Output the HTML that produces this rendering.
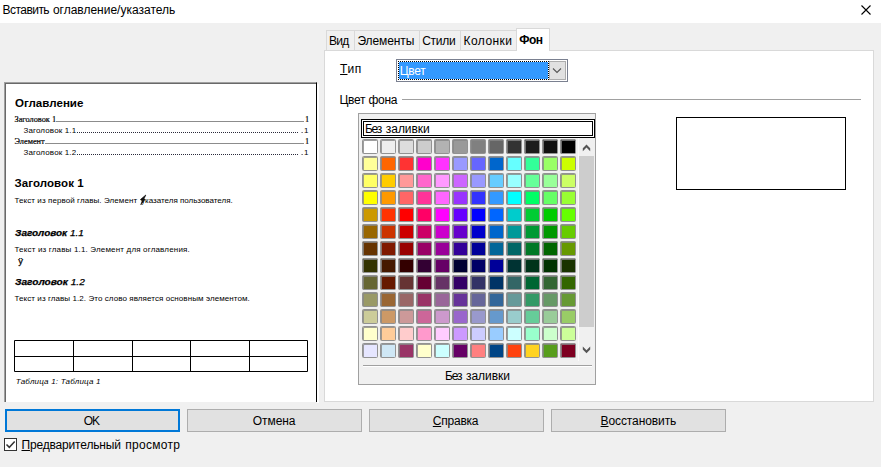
<!DOCTYPE html>
<html lang="ru">
<head>
<meta charset="utf-8">
<title>Вставить оглавление/указатель</title>
<style>
html,body{margin:0;padding:0}
body{width:881px;height:467px;overflow:hidden;background:#f0f0f0;position:relative;
 font-family:"Liberation Sans","DejaVu Sans",sans-serif;font-size:12px;color:#000}
div,i,span,b{box-sizing:border-box}
.a{position:absolute}
.t{position:absolute;white-space:nowrap;line-height:normal;color:#000}
.f-ui{font-family:"Liberation Sans","DejaVu Sans",sans-serif}
.f-se{font-family:"Liberation Serif","DejaVu Serif",serif}
.u{text-decoration:underline;text-underline-offset:1px}
#titlebar{left:0;top:0;width:881px;height:23px;background:#fff}
#close{left:858px;top:2px;width:16px;height:16px}
/* preview */
#pv{left:4px;top:82px;width:313px;height:320px;background:#fff;border-left:1px solid #a0a0a0;border-top:1px solid #a0a0a0;border-right:1px solid #000}
#pvw{left:317px;top:84px;width:2px;height:319px;background:#fff}
#pv:before{content:"";position:absolute;left:0;top:0;right:0;bottom:0;border-left:1px solid #696969;border-top:1px solid #696969}
.ld{position:absolute;height:1px}
/* tabs */
.tab{position:absolute;top:30px;height:21px;border:1px solid #d9d9d9;border-bottom:none;background:#f0f0f0}
#panel{left:324px;top:50px;width:550px;height:352px;background:#fff;border:1px solid #d9d9d9}
#tabsel{left:516px;top:28px;width:34px;height:23px;background:#fff;border:1px solid #d9d9d9;border-bottom:none}
/* combo */
#combo{left:396px;top:59px;width:172px;height:23px;background:#fff;border:1px solid #7a8090}
#csel{left:398px;top:61px;width:151px;height:19px;background:#3399ff;background-clip:padding-box;border:1px dotted #000;background-color:#3399ff}
#cselbg{left:398px;top:61px;width:151px;height:19px;background:#fff}
#cbtn{left:549px;top:61px;width:17px;height:19px;background:#e1e1e1;border:1px solid #adadad}
#sep{left:402px;top:99px;width:459px;height:1px;background:#a0a0a0}
/* popup */
#pop{left:358px;top:113px;width:238px;height:272px;background:#f0f0f0;border:1px solid #a0a0a0}
#none{left:361px;top:119px;width:234px;height:19px;background:#fff;border:1px solid #000;box-shadow:inset 0 0 0 1px #fff, inset 0 0 0 2px #000}
.c{position:absolute;width:16px;height:15px;border:1px solid #929292;border-radius:1.5px;box-shadow:inset 1px 1px 0 rgba(135,135,135,.8)}
#sb{left:579px;top:138px;width:16px;height:223px;background:#f0f0f0}
#sbl{left:578px;top:138px;width:1px;height:223px;background:#fafafa}
#thumb{left:579px;top:156px;width:15px;height:171px;background:#cdcdcd}
#psep{left:363px;top:365px;width:229px;height:1px;background:#a0a0a0;box-shadow:0 1px 0 #fff}
#prev{left:676px;top:117px;width:170px;height:73px;background:#fff;border:1px solid #000}
/* buttons */
.btn{position:absolute;top:409px;width:175px;height:23px;background:#e1e1e1;border:1px solid #adadad}
#bok{border:2px solid #0078d7}
#cb{left:4px;top:438px;width:13px;height:13px;background:#fff;border:1px solid #333}

</style>
</head>
<body>
<div id="titlebar" class="a"></div>
<svg id="close" class="a" viewBox="0 0 16 16"><path d="M3.5 3.5 L12.5 12.5 M12.5 3.5 L3.5 12.5" stroke="#000" stroke-width="1.1" fill="none"/></svg>

<div id="pv" class="a"></div>
<div id="pvw" class="a"></div>
<div class="ld a" style="left:56px;top:121px;width:248px;background:#8c8c8c"></div>
<div class="ld a" style="left:45px;top:143px;width:259px;background:#8c8c8c"></div>
<svg class="a" style="left:77px;top:131px" width="228" height="25" viewBox="0 0 228 25"><path d="M0 1.5H222 M0 23.5H222" stroke="#2a2a3a" stroke-width="1" stroke-dasharray="1 1" fill="none"/><path d="M224.6 1.5h1 M224.6 23.5h1" stroke="#2a2a3a" stroke-width="1" fill="none"/></svg>
<svg class="a" style="left:138px;top:193px" width="10" height="13" viewBox="0 0 10 13"><path d="M7.8 2 L2.4 6.6 L4.4 7.6 L2.8 11.6 L6.8 6.4 L6 5.8 Z" fill="#111" stroke="#111" stroke-width="0.7" stroke-linejoin="round"/></svg>
<svg class="a" style="left:14px;top:340px" width="296" height="33" viewBox="0 0 296 33"><path d="M0.5 0.5H293.5V31.5H0.5Z M0.5 16.5H293.5 M59.5 0.5V31.5 M118.5 0.5V31.5 M176.5 0.5V31.5 M235.5 0.5V31.5" stroke="#000" stroke-width="1" fill="none"/></svg>

<div class="tab" style="left:326px;width:29px"></div>
<div class="tab" style="left:354px;width:66px"></div>
<div class="tab" style="left:419px;width:42px"></div>
<div class="tab" style="left:460px;width:57px"></div>
<div id="panel" class="a"></div>
<div id="tabsel" class="a"></div>

<div id="combo" class="a"></div>
<div id="cselbg" class="a"></div>
<div id="csel" class="a"></div>
<div id="cbtn" class="a"></div>
<svg class="a" style="left:552px;top:66px" width="10" height="8" viewBox="0 0 10 8"><path d="M1 2.5 L5 6.5 L9 2.5" stroke="#555" stroke-width="1.1" fill="none"/></svg>
<div id="sep" class="a"></div>

<div id="pop" class="a"></div>
<div id="none" class="a"></div>
<i class="c" style="left:362px;top:139px;background:#ffffff"></i><i class="c" style="left:380px;top:139px;background:#eeeeee"></i><i class="c" style="left:398px;top:139px;background:#dddddd"></i><i class="c" style="left:416px;top:139px;background:#cccccc"></i><i class="c" style="left:434px;top:139px;background:#b2b2b2"></i><i class="c" style="left:452px;top:139px;background:#999999"></i><i class="c" style="left:470px;top:139px;background:#808080"></i><i class="c" style="left:488px;top:139px;background:#666666"></i><i class="c" style="left:506px;top:139px;background:#333333"></i><i class="c" style="left:524px;top:139px;background:#1c1c1c"></i><i class="c" style="left:542px;top:139px;background:#111111"></i><i class="c" style="left:560px;top:139px;background:#000000"></i><i class="c" style="left:362px;top:156px;background:#ffff99"></i><i class="c" style="left:380px;top:156px;background:#ff6600"></i><i class="c" style="left:398px;top:156px;background:#ff3333"></i><i class="c" style="left:416px;top:156px;background:#ff00cc"></i><i class="c" style="left:434px;top:156px;background:#ff33ff"></i><i class="c" style="left:452px;top:156px;background:#9999ff"></i><i class="c" style="left:470px;top:156px;background:#6666ff"></i><i class="c" style="left:488px;top:156px;background:#0066cc"></i><i class="c" style="left:506px;top:156px;background:#66ffff"></i><i class="c" style="left:524px;top:156px;background:#33ff99"></i><i class="c" style="left:542px;top:156px;background:#99ff66"></i><i class="c" style="left:560px;top:156px;background:#ccff00"></i><i class="c" style="left:362px;top:173px;background:#ffff66"></i><i class="c" style="left:380px;top:173px;background:#ffcc00"></i><i class="c" style="left:398px;top:173px;background:#ff9999"></i><i class="c" style="left:416px;top:173px;background:#ff66cc"></i><i class="c" style="left:434px;top:173px;background:#ff99ff"></i><i class="c" style="left:452px;top:173px;background:#cc66ff"></i><i class="c" style="left:470px;top:173px;background:#9999ff"></i><i class="c" style="left:488px;top:173px;background:#66ccff"></i><i class="c" style="left:506px;top:173px;background:#99ffff"></i><i class="c" style="left:524px;top:173px;background:#66ff99"></i><i class="c" style="left:542px;top:173px;background:#99ff99"></i><i class="c" style="left:560px;top:173px;background:#ccff66"></i><i class="c" style="left:362px;top:190px;background:#ffff00"></i><i class="c" style="left:380px;top:190px;background:#ff9900"></i><i class="c" style="left:398px;top:190px;background:#ff6666"></i><i class="c" style="left:416px;top:190px;background:#ff3399"></i><i class="c" style="left:434px;top:190px;background:#ff66ff"></i><i class="c" style="left:452px;top:190px;background:#9933ff"></i><i class="c" style="left:470px;top:190px;background:#3333ff"></i><i class="c" style="left:488px;top:190px;background:#3399ff"></i><i class="c" style="left:506px;top:190px;background:#00ffff"></i><i class="c" style="left:524px;top:190px;background:#00ff66"></i><i class="c" style="left:542px;top:190px;background:#66ff66"></i><i class="c" style="left:560px;top:190px;background:#99ff33"></i><i class="c" style="left:362px;top:207px;background:#cc9900"></i><i class="c" style="left:380px;top:207px;background:#ff3300"></i><i class="c" style="left:398px;top:207px;background:#ff0000"></i><i class="c" style="left:416px;top:207px;background:#ff0066"></i><i class="c" style="left:434px;top:207px;background:#ff00ff"></i><i class="c" style="left:452px;top:207px;background:#6600ff"></i><i class="c" style="left:470px;top:207px;background:#0000ff"></i><i class="c" style="left:488px;top:207px;background:#0066ff"></i><i class="c" style="left:506px;top:207px;background:#00cccc"></i><i class="c" style="left:524px;top:207px;background:#00cc33"></i><i class="c" style="left:542px;top:207px;background:#00cc00"></i><i class="c" style="left:560px;top:207px;background:#66ff00"></i><i class="c" style="left:362px;top:224px;background:#996600"></i><i class="c" style="left:380px;top:224px;background:#cc3300"></i><i class="c" style="left:398px;top:224px;background:#cc0000"></i><i class="c" style="left:416px;top:224px;background:#cc0066"></i><i class="c" style="left:434px;top:224px;background:#cc00cc"></i><i class="c" style="left:452px;top:224px;background:#6600cc"></i><i class="c" style="left:470px;top:224px;background:#0000cc"></i><i class="c" style="left:488px;top:224px;background:#0066cc"></i><i class="c" style="left:506px;top:224px;background:#009999"></i><i class="c" style="left:524px;top:224px;background:#009933"></i><i class="c" style="left:542px;top:224px;background:#009900"></i><i class="c" style="left:560px;top:224px;background:#66cc00"></i><i class="c" style="left:362px;top:241px;background:#663300"></i><i class="c" style="left:380px;top:241px;background:#801900"></i><i class="c" style="left:398px;top:241px;background:#990000"></i><i class="c" style="left:416px;top:241px;background:#990066"></i><i class="c" style="left:434px;top:241px;background:#990099"></i><i class="c" style="left:452px;top:241px;background:#330099"></i><i class="c" style="left:470px;top:241px;background:#000099"></i><i class="c" style="left:488px;top:241px;background:#006699"></i><i class="c" style="left:506px;top:241px;background:#006666"></i><i class="c" style="left:524px;top:241px;background:#007826"></i><i class="c" style="left:542px;top:241px;background:#006600"></i><i class="c" style="left:560px;top:241px;background:#669900"></i><i class="c" style="left:362px;top:258px;background:#333300"></i><i class="c" style="left:380px;top:258px;background:#461900"></i><i class="c" style="left:398px;top:258px;background:#330000"></i><i class="c" style="left:416px;top:258px;background:#330033"></i><i class="c" style="left:434px;top:258px;background:#660066"></i><i class="c" style="left:452px;top:258px;background:#000033"></i><i class="c" style="left:470px;top:258px;background:#000066"></i><i class="c" style="left:488px;top:258px;background:#000099"></i><i class="c" style="left:506px;top:258px;background:#003333"></i><i class="c" style="left:524px;top:258px;background:#00331a"></i><i class="c" style="left:542px;top:258px;background:#003300"></i><i class="c" style="left:560px;top:258px;background:#193300"></i><i class="c" style="left:362px;top:275px;background:#666633"></i><i class="c" style="left:380px;top:275px;background:#661900"></i><i class="c" style="left:398px;top:275px;background:#663333"></i><i class="c" style="left:416px;top:275px;background:#660033"></i><i class="c" style="left:434px;top:275px;background:#663366"></i><i class="c" style="left:452px;top:275px;background:#330066"></i><i class="c" style="left:470px;top:275px;background:#333366"></i><i class="c" style="left:488px;top:275px;background:#003366"></i><i class="c" style="left:506px;top:275px;background:#336666"></i><i class="c" style="left:524px;top:275px;background:#006633"></i><i class="c" style="left:542px;top:275px;background:#336633"></i><i class="c" style="left:560px;top:275px;background:#336600"></i><i class="c" style="left:362px;top:292px;background:#999966"></i><i class="c" style="left:380px;top:292px;background:#996633"></i><i class="c" style="left:398px;top:292px;background:#996666"></i><i class="c" style="left:416px;top:292px;background:#993366"></i><i class="c" style="left:434px;top:292px;background:#996699"></i><i class="c" style="left:452px;top:292px;background:#663399"></i><i class="c" style="left:470px;top:292px;background:#666699"></i><i class="c" style="left:488px;top:292px;background:#336699"></i><i class="c" style="left:506px;top:292px;background:#669999"></i><i class="c" style="left:524px;top:292px;background:#339966"></i><i class="c" style="left:542px;top:292px;background:#669966"></i><i class="c" style="left:560px;top:292px;background:#669933"></i><i class="c" style="left:362px;top:309px;background:#cccc99"></i><i class="c" style="left:380px;top:309px;background:#cc9966"></i><i class="c" style="left:398px;top:309px;background:#cc9999"></i><i class="c" style="left:416px;top:309px;background:#cc6699"></i><i class="c" style="left:434px;top:309px;background:#cc99cc"></i><i class="c" style="left:452px;top:309px;background:#9966cc"></i><i class="c" style="left:470px;top:309px;background:#9999cc"></i><i class="c" style="left:488px;top:309px;background:#6699cc"></i><i class="c" style="left:506px;top:309px;background:#99cccc"></i><i class="c" style="left:524px;top:309px;background:#66cc99"></i><i class="c" style="left:542px;top:309px;background:#99cc99"></i><i class="c" style="left:560px;top:309px;background:#99cc66"></i><i class="c" style="left:362px;top:326px;background:#ffffcc"></i><i class="c" style="left:380px;top:326px;background:#ffcc99"></i><i class="c" style="left:398px;top:326px;background:#ffcccc"></i><i class="c" style="left:416px;top:326px;background:#ff99cc"></i><i class="c" style="left:434px;top:326px;background:#ffccff"></i><i class="c" style="left:452px;top:326px;background:#cc99ff"></i><i class="c" style="left:470px;top:326px;background:#ccccff"></i><i class="c" style="left:488px;top:326px;background:#99ccff"></i><i class="c" style="left:506px;top:326px;background:#ccffff"></i><i class="c" style="left:524px;top:326px;background:#99ffcc"></i><i class="c" style="left:542px;top:326px;background:#ccffcc"></i><i class="c" style="left:560px;top:326px;background:#ccff99"></i><i class="c" style="left:362px;top:343px;background:#e6e6ff"></i><i class="c" style="left:380px;top:343px;background:#cfe7f5"></i><i class="c" style="left:398px;top:343px;background:#993366"></i><i class="c" style="left:416px;top:343px;background:#ffffcc"></i><i class="c" style="left:434px;top:343px;background:#ccffff"></i><i class="c" style="left:452px;top:343px;background:#660066"></i><i class="c" style="left:470px;top:343px;background:#ff8080"></i><i class="c" style="left:488px;top:343px;background:#004586"></i><i class="c" style="left:506px;top:343px;background:#ff420e"></i><i class="c" style="left:524px;top:343px;background:#ffd320"></i><i class="c" style="left:542px;top:343px;background:#579d1c"></i><i class="c" style="left:560px;top:343px;background:#7e0021"></i>
<div id="sb" class="a"></div>
<div id="sbl" class="a"></div>
<div id="thumb" class="a"></div>
<svg class="a" style="left:580px;top:142px" width="14" height="12" viewBox="0 0 14 12"><path d="M6.5 2.6 L10.2 6.3 V9.2 L6.5 5.5 L2.8 9.2 V6.3 Z" fill="#555"/></svg>
<svg class="a" style="left:580px;top:344px" width="14" height="12" viewBox="0 0 14 12"><path d="M2.8 2.6 V5.5 L6.5 9.2 L10.2 5.5 V2.6 L6.5 6.3 Z" fill="#555"/></svg>
<div id="psep" class="a"></div>
<div id="prev" class="a"></div>

<div id="bok" class="btn" style="left:5px"></div>
<div class="btn" style="left:187px"></div>
<div class="btn" style="left:369px"></div>
<div class="btn" style="left:551px"></div>
<div id="cb" class="a"></div>
<svg class="a" style="left:5px;top:439px" width="11" height="11" viewBox="0 0 11 11"><path d="M1.5 5.5 L4.3 8.3 L9.7 2.5" stroke="#333" stroke-width="1.5" fill="none"/></svg>

<div class="t f-ui" style="left:2.50px;top:3.00px;font-size:12px;letter-spacing:-0.539px;">Вставить</div>
<div class="t f-ui" style="left:52.90px;top:3.00px;font-size:12px;letter-spacing:-0.002px;">оглавление/указатель</div>
<div class="t f-ui" style="left:329.10px;top:34.00px;font-size:12px;letter-spacing:-0.759px;">Вид</div>
<div class="t f-ui" style="left:357.50px;top:34.00px;font-size:12px;letter-spacing:-0.111px;">Элементы</div>
<div class="t f-ui" style="left:422.20px;top:34.00px;font-size:12px;letter-spacing:-0.27px;">Стили</div>
<div class="t f-ui" style="left:463.60px;top:34.00px;font-size:12px;letter-spacing:0.417px;">Колонки</div>
<div class="t f-ui" style="left:519.20px;top:33.00px;font-size:12px;letter-spacing:-0.464px;font-weight:bold;">Фон</div>
<div class="t f-ui" style="left:340.10px;top:62.00px;font-size:12px;letter-spacing:0.592px;"><span class="u">Т</span>ип</div>
<div class="t f-ui" style="left:399.80px;top:64.00px;font-size:12px;letter-spacing:-0.33px;color:#fff;">Цвет</div>
<div class="t f-ui" style="left:339.50px;top:93.00px;font-size:12px;letter-spacing:-0.26px;">Цвет фона</div>
<div class="t f-ui" style="left:364.90px;top:122.00px;font-size:12px;letter-spacing:-1.198px;">Без</div>
<div class="t f-ui" style="left:385.80px;top:122.00px;font-size:12px;letter-spacing:-0.036px;">заливки</div>
<div class="t f-ui" style="left:445.10px;top:369.00px;font-size:12px;letter-spacing:-1.198px;">Без</div>
<div class="t f-ui" style="left:466.00px;top:369.00px;font-size:12px;letter-spacing:-0.036px;">заливки</div>
<div class="t f-ui" style="left:83.70px;top:414.00px;font-size:12px;letter-spacing:-0.944px;">OK</div>
<div class="t f-ui" style="left:252.80px;top:414.00px;font-size:12px;letter-spacing:-0.073px;">Отмена</div>
<div class="t f-ui" style="left:432.80px;top:414.00px;font-size:12px;letter-spacing:-0.232px;"><span class="u">С</span>правка</div>
<div class="t f-ui" style="left:600.60px;top:414.00px;font-size:12px;letter-spacing:-0.105px;"><span class="u">В</span>осстановить</div>
<div class="t f-ui" style="left:21.50px;top:438.00px;font-size:12px;letter-spacing:-0.176px;"><span class="u">П</span>редварительный</div>
<div class="t f-ui" style="left:125.30px;top:438.00px;font-size:12px;letter-spacing:0.287px;">просмотр</div>
<div class="t f-ui" style="left:14.50px;top:98.00px;font-size:10.2px;letter-spacing:0px;transform:scaleX(1.1350);transform-origin:0 0;font-weight:bold;">Оглавление</div>
<div class="t f-se" style="left:14.50px;top:115.00px;font-size:8.3px;letter-spacing:-0.004px;-webkit-text-stroke:0.2px #000;">Заголовок 1</div>
<div class="t f-ui" style="left:23.50px;top:126.00px;font-size:8px;letter-spacing:0.144px;">Заголовок 1.1</div>
<div class="t f-se" style="left:14.50px;top:137.00px;font-size:8.3px;letter-spacing:-0.001px;-webkit-text-stroke:0.2px #000;">Элемент</div>
<div class="t f-ui" style="left:23.50px;top:148.00px;font-size:8px;letter-spacing:0.144px;">Заголовок 1.2</div>
<div class="t f-se" style="left:305.00px;top:115.00px;font-size:8.3px;letter-spacing:0px;-webkit-text-stroke:0.2px #000;">1</div>
<div class="t f-ui" style="left:304.10px;top:126.00px;font-size:8px;letter-spacing:0px;">1</div>
<div class="t f-se" style="left:305.00px;top:137.00px;font-size:8.3px;letter-spacing:0px;-webkit-text-stroke:0.2px #000;">1</div>
<div class="t f-ui" style="left:304.10px;top:148.00px;font-size:8px;letter-spacing:0px;">1</div>
<div class="t f-ui" style="left:14.50px;top:177.00px;font-size:11.5px;letter-spacing:0.075px;font-weight:bold;">Заголовок 1</div>
<div class="t f-ui" style="left:14.50px;top:196.00px;font-size:8px;letter-spacing:0.083px;">Текст из первой главы. Элемент</div>
<div class="t f-ui" style="left:141.10px;top:196.00px;font-size:8px;letter-spacing:-0.011px;">указателя пользователя.</div>
<div class="t f-ui" style="left:14.50px;top:228.00px;font-size:9px;letter-spacing:0px;transform:scaleX(1.1072);transform-origin:0 0;font-style:italic;-webkit-text-stroke:0.25px #000;"><b>Заголовок</b> 1.1</div>
<div class="t f-ui" style="left:14.50px;top:245.00px;font-size:8px;letter-spacing:0.172px;">Текст из главы 1.1. Элемент для оглавления.</div>
<div class="t f-ui" style="left:18.20px;top:255.00px;font-size:9.5px;letter-spacing:0px;-webkit-text-stroke:0.25px #000;">ÿ</div>
<div class="t f-ui" style="left:14.50px;top:277.00px;font-size:9px;letter-spacing:0px;transform:scaleX(1.1233);transform-origin:0 0;font-style:italic;-webkit-text-stroke:0.25px #000;"><b>Заголовок</b> 1.2</div>
<div class="t f-ui" style="left:14.50px;top:294.00px;font-size:8px;letter-spacing:0.08px;">Текст из главы 1.2. Это слово является основным элементом.</div>
<div class="t f-ui" style="left:15.80px;top:377.00px;font-size:8px;letter-spacing:0.2px;font-style:italic;">Таблица 1: Таблица 1</div>

</body>
</html>
